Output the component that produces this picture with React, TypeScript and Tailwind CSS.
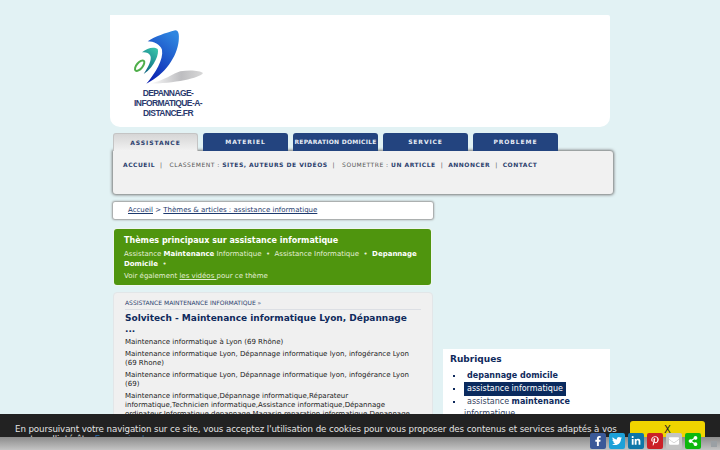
import React from 'react';
import { FaFacebookF, FaTwitter, FaLinkedinIn, FaPinterestP, FaEnvelope, FaShareAlt } from 'react-icons/fa';

const tabs = ['ASSISTANCE', 'MATERIEL', 'REPARATION DOMICILE', 'SERVICE', 'PROBLEME'];

const Logo = () => (
  <svg width="72" height="57" viewBox="65 55 216 171" className="block">
    <defs>
      <linearGradient id="blue" x1="0.7" y1="0" x2="0.2" y2="1">
        <stop offset="0" stopColor="#2f86e0" />
        <stop offset="1" stopColor="#0a1fb0" />
      </linearGradient>
      <linearGradient id="teal" x1="0.7" y1="0" x2="0.2" y2="1">
        <stop offset="0" stopColor="#35c0a8" />
        <stop offset="1" stopColor="#0a5f80" />
      </linearGradient>
      <linearGradient id="shade" x1="0" y1="0" x2="1" y2="0">
        <stop offset="0" stopColor="#ffffff" />
        <stop offset="0.6" stopColor="#bdbdc0" />
        <stop offset="1" stopColor="#d8d8d8" />
      </linearGradient>
    </defs>
    <path d="M115 222C160 215 190 190 210 185C240 180 270 183 278 190C270 205 190 222 115 222Z" fill="url(#shade)" />
    <path d="M112 95C135 80 165 70 195 62C205 62 207 75 205 95C200 140 165 195 108 222C135 190 160 150 155 120C150 105 130 95 112 95Z" fill="url(#blue)" />
    <path d="M95 128C110 115 130 110 142 118C147 130 135 170 100 193C115 170 125 150 120 138C115 128 105 127 95 128Z" fill="url(#teal)" />
    <ellipse cx="88" cy="168" rx="19" ry="9" transform="rotate(-50 88 168)" fill="none" stroke="#4fae4a" strokeWidth="6" />
  </svg>
);

const Sep = () => <span className="mx-[5px] font-normal text-[#555]">|</span>;

const Share = ({ bg, children }: { bg: string; children: React.ReactNode }) => (
  <div className={`w-[16px] h-[16px] rounded-[2px] flex items-center justify-center text-white text-[10px] ${bg}`}>{children}</div>
);

export default function App() {
  return (
    <div className="relative w-[720px] h-[450px] overflow-hidden bg-[#e2f2f4] pt-[15px] text-[#1c2a4a] font-['DejaVu_Sans',sans-serif]">
      <div className="w-[500px] mx-auto">
        <header className="h-[112px] bg-white rounded-b-[10px] rounded-tr-[2px] pl-[22px] pt-[13px]">
          <div className="w-[72px] flex flex-col items-center">
            <Logo />
            <div className="text-center text-[8.5px] leading-[10px] font-bold tracking-[-0.6px] text-[#2b3a6e] font-['Liberation_Sans',sans-serif] mt-[3px] w-[80px] shrink-0">
              DEPANNAGE-
              <br />
              INFORMATIQUE-A-
              <br />
              DISTANCE.FR
            </div>
          </div>
        </header>

        <nav className="mt-[6px] ml-[3px] w-[500px]">
          <div className="flex gap-[5px] h-[18px]">
            {tabs.map((t, i) => (
              <div
                key={t}
                className={
                  i === 0
                    ? 'w-[85px] rounded-t-[3px] border border-b-0 border-[#c4c4c4] bg-gradient-to-b from-[#d6d6d6] to-[#f2f2f2] text-[#2c3f6e] text-center text-[6px] font-bold tracking-[0.9px] leading-[18px]'
                    : 'w-[85px] rounded-t-[3px] bg-[#23447f] text-[#e8edf5] text-center text-[6px] font-bold leading-[18px] whitespace-nowrap ' +
                      (t === 'REPARATION DOMICILE' ? 'tracking-[0.25px]' : 'tracking-[0.9px]')
                }
              >
                {t}
              </div>
            ))}
          </div>
          <div className="h-[43px] bg-[#f1f1f1] rounded-b-[3px] rounded-tr-[3px] shadow-[0_0_3px_1px_#777] pl-[10px] pt-[9px] text-[6px] leading-[9px] tracking-[0.5px] font-bold text-[#2c3f6e] whitespace-nowrap">
            <span>ACCUEIL</span>
            <Sep />
            <span className="ml-[2px] font-normal text-[#555]">CLASSEMENT : </span>SITES, AUTEURS DE VIDÉOS
            <Sep />
            <span className="ml-[2px] font-normal text-[#555]">SOUMETTRE : </span>UN ARTICLE
            <Sep />
            ANNONCER
            <Sep />
            CONTACT
          </div>
        </nav>

        <div className="flex mt-[8px] ml-[3px] gap-[10px]">
          <main className="w-[320px] shrink-0">
            <div className="h-[17px] bg-white rounded-[2px] shadow-[0_0_2px_1px_#999] pl-[15px] text-[7px] leading-[17px] text-[#1d3a6e] whitespace-nowrap">
              <span className="underline">Accueil</span> &gt; <span className="underline">Thèmes &amp; articles : assistance informatique</span>
            </div>

            <section className="mt-[10px] ml-[1px] w-[317px] h-[56px] bg-[#4f950e] rounded-[3px] px-[10px] pt-[6px] text-[7px] text-[#e4efd6] shadow-[0_0_0_1px_#eef5ee]">
              <h2 className="text-[8px] leading-[12px] font-bold text-white">Thèmes principaux sur assistance informatique</h2>
              <p className="mt-[2px] leading-[10px]">
                Assistance <b className="text-white">Maintenance</b> Informatique &nbsp;•&nbsp; Assistance Informatique &nbsp;•&nbsp;{' '}
                <b className="text-white">Depannage Domicile</b> &nbsp;•
              </p>
              <p className="mt-[2px] leading-[10px]">
                Voir également <span className="underline">les vidéos </span>pour ce thème
              </p>
            </section>

            <article className="mt-[7px] h-[150px] bg-[#f0f0f0] border border-[#e2e6e8] rounded-[4px] px-[11px] pt-[5px] text-[7px] leading-[9px] text-[#222]">
              <div className="text-[6px] leading-[9px] text-[#2c3f6e] pb-[2px] border-b border-[#dcdfe4]">ASSISTANCE MAINTENANCE INFORMATIQUE »</div>
              <h1 className="mt-[3px] pr-[8px] text-[9px] leading-[11px] font-bold text-[#0f2a5c]">Solvitech - Maintenance informatique Lyon, Dépannage ...</h1>
              <p className="mt-[3px]">Maintenance informatique à Lyon (69 Rhône)</p>
              <p className="mt-[3px]">Maintenance informatique Lyon, Dépannage informatique lyon, infogérance Lyon (69 Rhone)</p>
              <p className="mt-[3px]">Maintenance informatique Lyon, Dépannage informatique lyon, infogérance Lyon (69)</p>
              <p className="mt-[3px]">
                Maintenance informatique,Dépannage informatique,Réparateur informatique,Technicien informatique,Assistance informatique,Dépannage ordinateur,Informatique depannage,Magasin reparation informatique,Depannage
              </p>
            </article>
          </main>

          <aside className="w-[167px] shrink-0 mt-[147px] h-[120px] bg-white pl-[7px] pt-[4px] text-[#0f2a5c]">
            <h3 className="text-[9px] leading-[12px] font-bold">Rubriques</h3>
            <ul className="mt-[5px] list-[square] pl-[14px] text-[8px] leading-[12px]">
              <li className="pl-[3px] font-bold">depannage domicile</li>
              <li>
                <span className="inline-block bg-[#0a2a5e] text-white px-[3px] leading-[14px]">assistance informatique</span>
              </li>
              <li className="pl-[3px]">
                <span className="text-[#333f5e]">assistance</span> <b>maintenance</b> <span className="text-[#333f5e] -ml-[3px]">informatique</span>
              </li>
            </ul>
          </aside>
        </div>
      </div>

      {/* cookie bar + share strip sit over the page */}
      <div className="absolute left-0 right-0 top-[414px] h-[23px] bg-[#222] overflow-hidden">
        <div className="absolute left-[15px] top-[10px] w-[612px] text-[8.7px] tracking-[-0.1px] leading-[10px] text-[#e4e4e4]">
          En poursuivant votre navigation sur ce site, vous acceptez l'utilisation de cookies pour vous proposer des contenus et services adaptés à vos centres d'intérêts. <span className="text-[#2c6ea8]">En savoir plus</span>
        </div>
        <div className="absolute left-[630px] top-[7px] w-[75px] h-[20px] rounded-[3px] bg-[#f0d400] text-center text-[10px] leading-[18px] text-[#222]">X</div>
      </div>
      <div className="absolute left-0 right-0 top-[437px] h-[13px] bg-gradient-to-b from-[#8c8c8c] to-[#c4c4c4]" />
      <div className="absolute left-[590px] top-[433px] flex gap-[3px]">
        <Share bg="bg-[#3b5998]"><FaFacebookF /></Share>
        <Share bg="bg-[#1da1d8]"><FaTwitter /></Share>
        <Share bg="bg-[#0e76a8]"><FaLinkedinIn /></Share>
        <Share bg="bg-[#cb2027]"><FaPinterestP /></Share>
        <Share bg="bg-[#c4c4c4]"><FaEnvelope /></Share>
        <Share bg="bg-[#0cb80c]"><FaShareAlt /></Share>
      </div>
      <div className="absolute left-[711px] top-[441px] w-[6px] h-[6px] bg-[#9aa0a4]" />
    </div>
  );
}
